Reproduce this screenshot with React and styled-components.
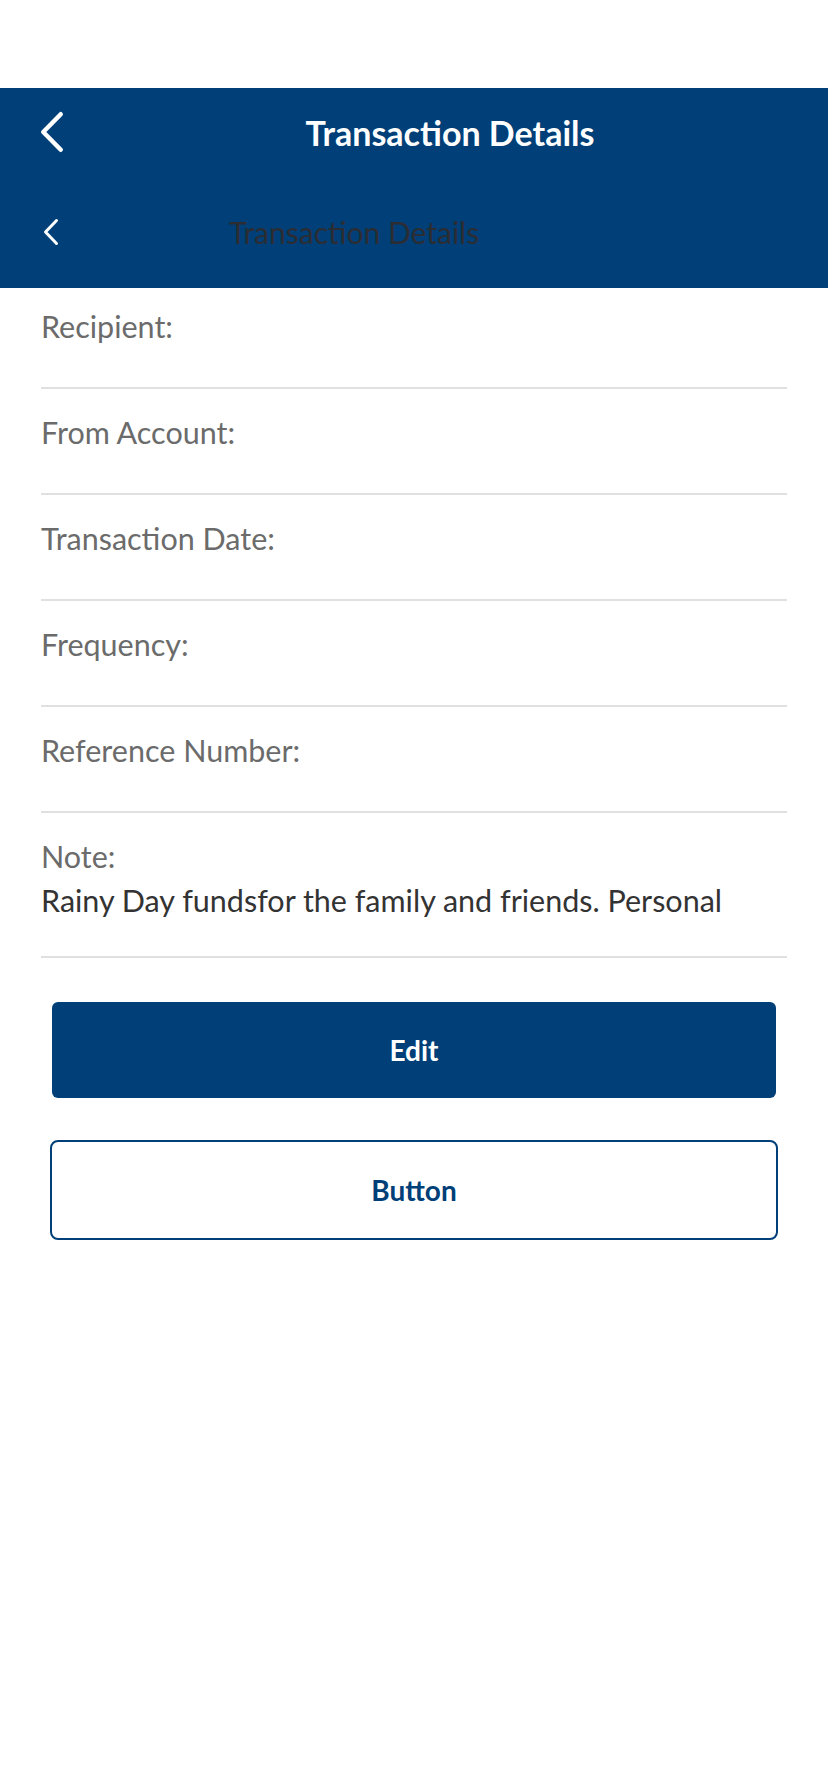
import React from "react";
import styled, { createGlobalStyle } from "styled-components";

const GlobalStyle = createGlobalStyle`
  html, body {
    margin: 0;
    padding: 0;
    background: #fff;
  }
  body {
    font-family: "Lato", "Noto Sans", sans-serif;
  }
`;

const NAVY = "#003f77";

const Screen = styled.div`
  width: 828px;
  min-height: 1792px;
  background: #fff;
  padding-top: 88px;
  box-sizing: border-box;
`;

const Header = styled.header`
  background: ${NAVY};
  display: flex;
  flex-direction: column;
`;

const TopBar = styled.div`
  height: 88px;
  display: flex;
  align-items: center;
  padding-left: 40px;
`;

const TopTitle = styled.h1`
  flex: 1;
  margin: 0;
  padding-left: 8px;
  text-align: center;
  color: #fff;
  font-size: 34px;
  font-weight: 700;
`;

const SubBar = styled.div`
  height: 112px;
  display: flex;
  align-items: center;
  padding-left: 43px;
`;

const SubTitle = styled.h2`
  margin: 0 0 0 170px;
  color: #2b2d33;
  font-size: 30px;
  font-weight: 400;
`;

const BackButton = styled.button`
  border: 0;
  background: none;
  padding: 0;
  display: flex;
  cursor: pointer;
`;

const List = styled.div`
  padding: 0 41px;
`;

const Row = styled.div`
  min-height: 106px;
  padding: 25px 0 ${(p) => (p.$tall ? "39px" : "0")};
  box-sizing: border-box;
  border-bottom: 2px solid #e0e0e0;
  &:first-child {
    min-height: 101px;
    padding-top: 20px;
  }
`;

const Label = styled.div`
  color: #6b6b6b;
  font-size: 30.5px;
  line-height: 36px;
`;

const Value = styled.div`
  color: ${(p) => (p.$hidden ? "#fff" : "#333")};
  font-size: 30.5px;
  line-height: 34px;
  margin-top: 9px;
`;

const Actions = styled.div`
  padding: 44px 50px 0;
  display: flex;
  flex-direction: column;
  gap: 42px;
`;

const PrimaryButton = styled.button`
  height: 96px;
  margin: 0 2px;
  border: 0;
  border-radius: 6px;
  background: ${NAVY};
  color: #fff;
  font-family: inherit;
  font-size: 28px;
  font-weight: 700;
`;

const OutlineButton = styled.button`
  height: 100px;
  border: 2px solid ${NAVY};
  border-radius: 8px;
  background: #fff;
  color: ${NAVY};
  font-family: inherit;
  font-size: 28px;
  font-weight: 700;
`;

const Chevron = ({ w, h, sw }) => (
  <svg width={w} height={h} viewBox={`0 0 ${w} ${h}`} fill="none">
    <polyline
      points={`${w - sw / 2 - 1},${sw / 2 + 1} ${sw / 2 + 1},${h / 2} ${w - sw / 2 - 1},${h - sw / 2 - 1}`}
      stroke="#fff"
      strokeWidth={sw}
      strokeLinecap="round"
      strokeLinejoin="round"
    />
  </svg>
);

const details = [
  { label: "Recipient:", value: "John Smith", hidden: true },
  { label: "From Account:", value: "Checking 1234", hidden: true },
  { label: "Transaction Date:", value: "01/01/2024", hidden: true },
  { label: "Frequency:" },
  { label: "Reference Number:" },
];

export default function App() {
  return (
    <>
      <GlobalStyle />
      <Screen>
        <Header>
          <TopBar>
            <BackButton type="button" title="Back">
              <Chevron w={24} h={42} sw={4.5} />
            </BackButton>
            <TopTitle>Transaction Details</TopTitle>
          </TopBar>
          <SubBar>
            <BackButton type="button" title="Back">
              <Chevron w={16} h={28} sw={3} />
            </BackButton>
            <SubTitle>Transaction Details</SubTitle>
          </SubBar>
        </Header>

        <List>
          {details.map((d) => (
            <Row key={d.label}>
              <Label>{d.label}</Label>
              {d.value && <Value $hidden={d.hidden}>{d.value}</Value>}
            </Row>
          ))}
          <Row $tall>
            <Label>Note:</Label>
            <Value>Rainy Day fundsfor the family and friends. Personal</Value>
          </Row>
        </List>

        <Actions>
          <PrimaryButton type="button">Edit</PrimaryButton>
          <OutlineButton type="button">Button</OutlineButton>
        </Actions>
      </Screen>
    </>
  );
}
